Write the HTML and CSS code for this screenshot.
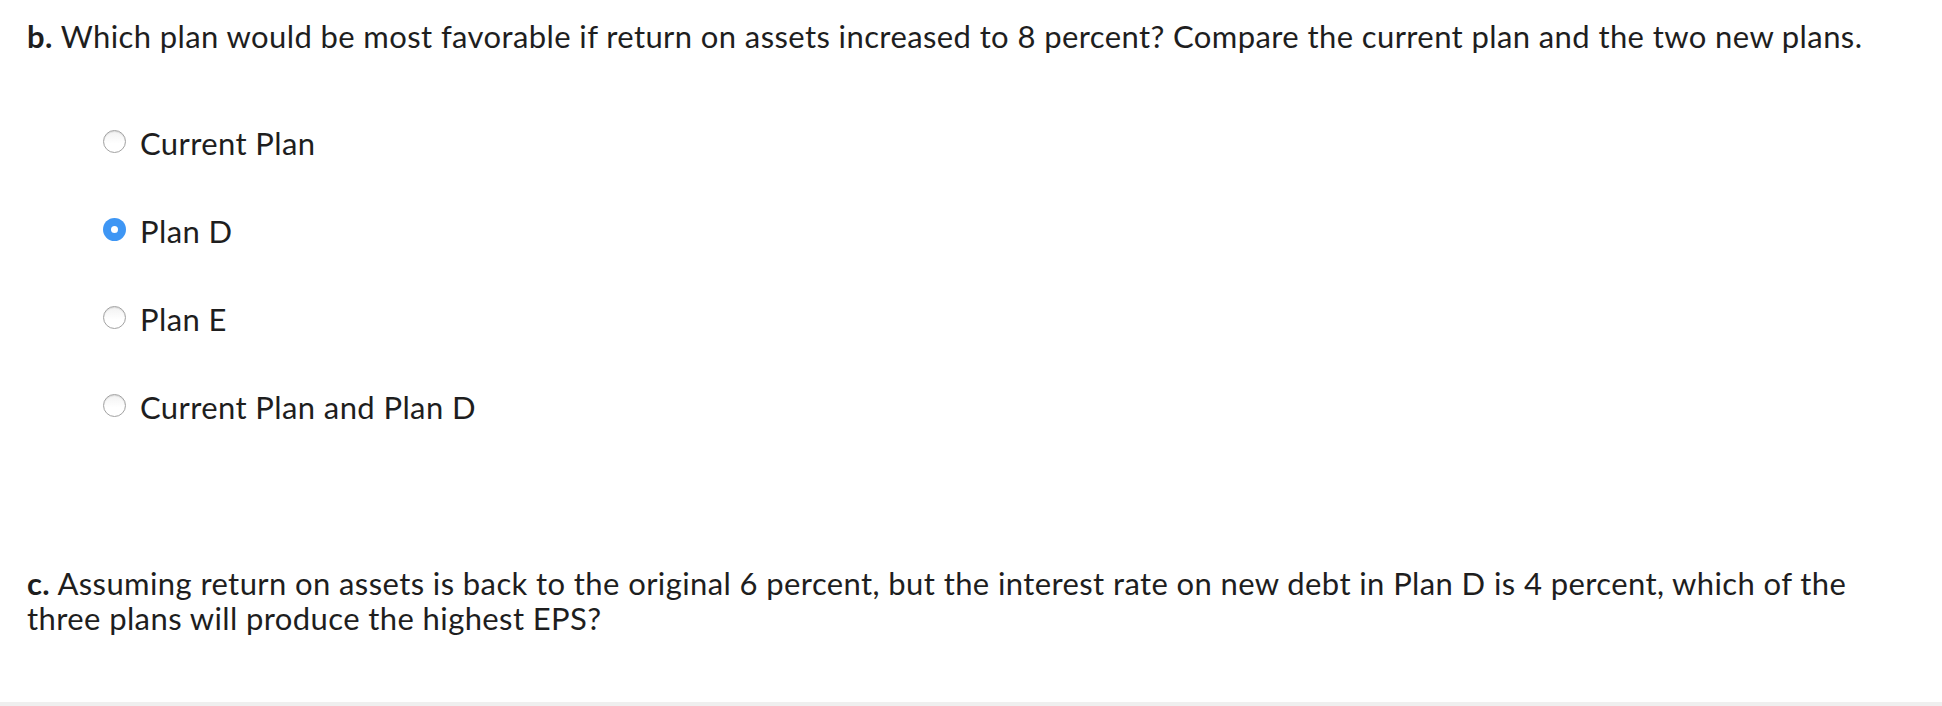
FILE: index.html
```html
<!DOCTYPE html>
<html>
<head>
<meta charset="utf-8">
<link rel="stylesheet" href="styles.css">
</head>
<body>
<div class="page">
  <p class="question qb"><strong>b.</strong> Which plan would be most favorable if return on assets increased to 8 percent? Compare the current plan and the two new plans.</p>
  <div class="options">
    <label class="option"><span class="radio"></span><span class="label">Current Plan</span></label>
    <label class="option"><span class="radio checked"></span><span class="label">Plan D</span></label>
    <label class="option"><span class="radio"></span><span class="label">Plan E</span></label>
    <label class="option"><span class="radio"></span><span class="label">Current Plan and Plan D</span></label>
  </div>
  <p class="question qc"><strong>c.</strong> Assuming return on assets is back to the original 6 percent, but the interest rate on new debt in Plan D is 4 percent, which of the three plans will produce the highest EPS?</p>
</div>
<div class="strip"></div>
</body>
</html>
```

FILE: styles.css
```css
html, body {
  margin: 0;
  padding: 0;
  background: #ffffff;
}
body {
  font-family: "Lato", "Liberation Sans", sans-serif;
  color: #1e1e1e;
}
.page {
  height: 702px;
  padding: 0 27px;
  box-sizing: border-box;
  overflow: hidden;
}
.question {
  margin: 0;
  font-size: 31px;
  letter-spacing: 0.4px;
  line-height: 35px;
  width: 1880px;
}
.question strong {
  font-weight: 700;
}
.qb {
  padding-top: 19px;
}
.options {
  display: flex;
  flex-direction: column;
  gap: 48px;
  margin-top: 67px;
  padding-left: 76px;
}
.option {
  display: flex;
  align-items: center;
  gap: 14px;
  font-size: 31px;
  letter-spacing: 0.4px;
  line-height: 35px;
}
.label {
  padding-top: 5px;
}
.radio {
  width: 23px;
  height: 23px;
  border-radius: 50%;
  box-sizing: border-box;
  border: 1px solid #a2a2a2;
  background: linear-gradient(#f2f2f2, #ffffff 60%);
  box-shadow: inset 0 1px 1px rgba(0,0,0,0.1);
  display: flex;
  align-items: center;
  justify-content: center;
  flex: none;
}
.radio.checked {
  border: none;
  background: #3e96f4;
  box-shadow: none;
}
.radio.checked::after {
  content: "";
  width: 7px;
  height: 7px;
  border-radius: 50%;
  background: #ffffff;
}
.qc {
  margin-top: 141px;
}
.strip {
  height: 4px;
  background: #efefef;
}
```
